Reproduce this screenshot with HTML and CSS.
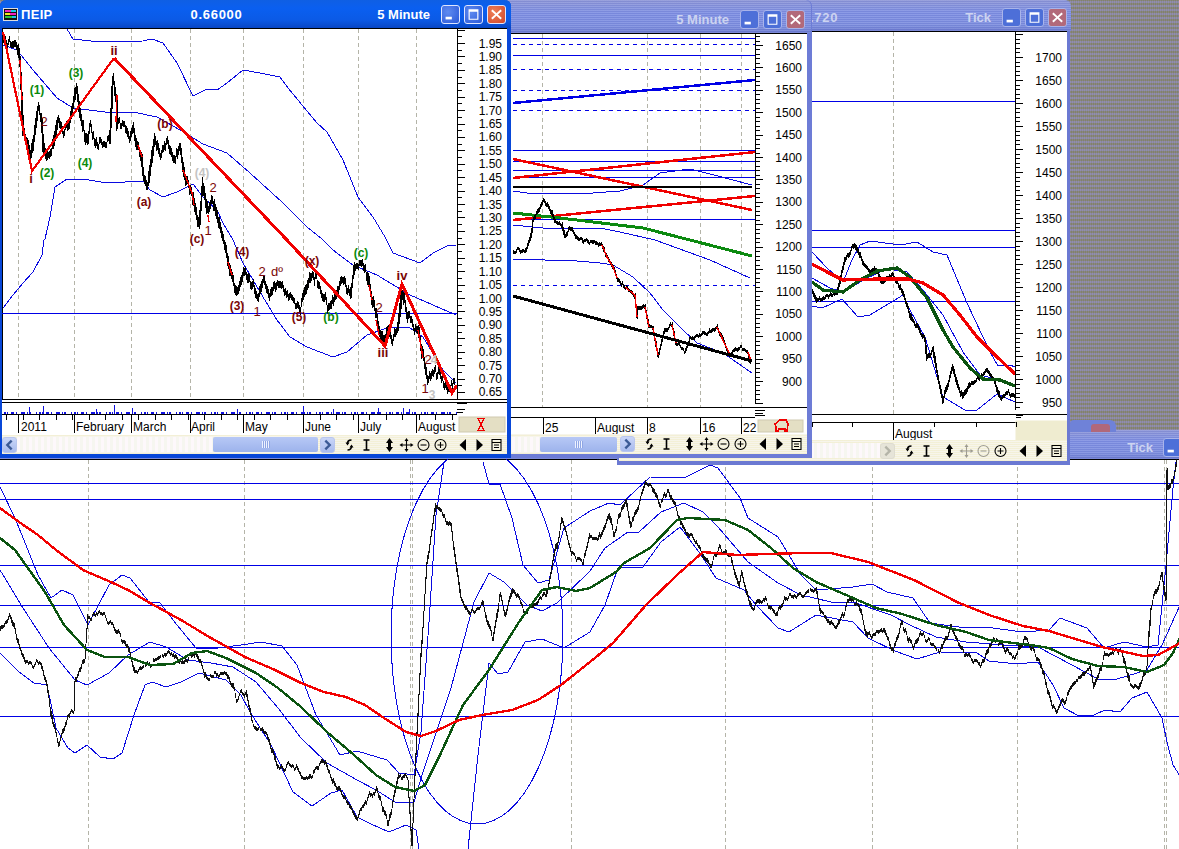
FILE: index.html
```html
<!DOCTYPE html>
<html lang="en">
<head>
    <meta charset="UTF-8">
    <title>ΠΕΙΡ charts</title>
    <link rel="stylesheet" href="styles.css">
</head>
<body>

<svg class="defs" width="0" height="0">
    <!-- column by column noise for the price lines, green is held at .5 so nothing moves sideways -->
    <filter id="noise-main" x="-2%" y="-2%" width="104%" height="104%" color-interpolation-filters="sRGB">
        <feTurbulence type="fractalNoise" baseFrequency="0.28 0.003" numOctaves="2" seed="7"/>
        <feColorMatrix values="1 0 0 0 0  0 0 0 0 .5  0 0 1 0 0  0 0 0 0 1" result="n"/>
        <feDisplacementMap in="SourceGraphic" in2="n" scale="15" xChannelSelector="G" yChannelSelector="R"/>
        <feMorphology operator="dilate" radius="0 1"/>
    </filter>
    <filter id="noise-bars" x="-2%" y="-2%" width="104%" height="104%" color-interpolation-filters="sRGB">
        <feTurbulence type="fractalNoise" baseFrequency="0.45 0.004" numOctaves="2" seed="3"/>
        <feColorMatrix values="1 0 0 0 0  0 0 0 0 .5  0 0 1 0 0  0 0 0 0 1" result="n"/>
        <feDisplacementMap in="SourceGraphic" in2="n" scale="20" xChannelSelector="G" yChannelSelector="R"/>
        <feMorphology operator="dilate" radius="0 2"/>
    </filter>
    <filter id="noise-small" x="-2%" y="-2%" width="104%" height="104%" color-interpolation-filters="sRGB">
        <feTurbulence type="fractalNoise" baseFrequency="0.35 0.004" numOctaves="2" seed="11"/>
        <feColorMatrix values="1 0 0 0 0  0 0 0 0 .5  0 0 1 0 0  0 0 0 0 1" result="n"/>
        <feDisplacementMap in="SourceGraphic" in2="n" scale="9" xChannelSelector="G" yChannelSelector="R"/>
        <feMorphology operator="dilate" radius="0 1"/>
    </filter>
    <symbol id="i-sync" viewBox="0 0 12 14"><path class="sym-ln" d="M8 2C5 2 4 3 4 6M4 12C7 12 8 11 8 8"/><path d="M2 4.500 4 7.500 6 4.500ZM6 9.500 8 6.500 10 9.500Z"/></symbol>
    <symbol id="i-beam" viewBox="0 0 12 14"><path class="sym-ln" d="M3 2h6M6 2v10M3 12h6"/></symbol>
    <symbol id="i-updown" viewBox="0 0 12 14"><path d="M6 0 9.500 5H7.500V9H9.500L6 14 2.500 9H4.500V5H2.500Z"/></symbol>
    <symbol id="i-move" viewBox="0 0 14 14"><path class="sym-thin" d="M7 2v10M2 7h10"/><path d="M7 0 9 3H5ZM7 14 9 11H5ZM0 7 3 5V9ZM14 7 11 5V9Z"/></symbol>
    <symbol id="i-minus" viewBox="0 0 14 14"><circle class="sym-thin" cx="7" cy="7" r="5.500"/><path class="sym-thin" d="M4 7h6"/></symbol>
    <symbol id="i-plus" viewBox="0 0 14 14"><circle class="sym-thin" cx="7" cy="7" r="5.500"/><path class="sym-thin" d="M4 7h6M7 4v6"/></symbol>
    <symbol id="i-left" viewBox="0 0 12 14"><path d="M9.500 1 3 7 9.500 13Z"/></symbol>
    <symbol id="i-right" viewBox="0 0 12 14"><path d="M3 1 9.500 7 3 13Z"/></symbol>
    <symbol id="i-page" viewBox="0 0 12 14"><path class="sym-thin" d="M1.500 1.500h9v11h-9ZM1.500 4.500h9M3.500 7h5M3.500 9.500h5"/></symbol>
    <symbol id="c-min" viewBox="0 0 19 19"><path d="M4 12h7v3H4Z"/></symbol>
    <symbol id="c-max" viewBox="0 0 19 19"><path d="M4 3.500h11v12H4ZM5.300 6.500v7.700h8.400V6.500Z" fill-rule="evenodd"/></symbol>
    <symbol id="c-close" viewBox="0 0 19 19"><path d="M5 4 9.500 8 14 4 15.500 5.500 11 9.500 15.500 13.500 14 15 9.500 11 5 15 3.500 13.500 8 9.500 3.500 5.500Z"/></symbol>
</svg>

<div class="desktop">

    <section class="win-back">
        <div class="stray"><span class="stray-red"></span></div>
        <header class="title title-faded title-back">
            <span class="t-tf">Tick</span>
            <span class="cap cap-faded"><svg><use href="#c-min"/></svg></span>
        </header>
        <svg class="main-chart" viewBox="0 459 1179 390">
            <path class="frame" d="M0 459.500H1179"/>
            <path class="grid" d="M88.500 460V849M244.500 460V849M410.500 460V849M412.500 460V849M571.500 460V849M725.500 460V849M872.500 460V849M1017.500 460V849M1164.500 460V849M1166.500 460V849"/>
            <path class="hline" d="M0 483.500H1179M0 499.500H1179M0 565.500H1179M0 605.500H1179M0 647.500H1179M0 716.500H1179"/>
            <ellipse class="band" cx="477" cy="636" rx="86" ry="188"/>
            <polyline class="band" points="0,487 15,518 38,575 51,598 62,590 73,595 88,625 109,585 122,575 130,578 149,602 160,603 177,625 196,648 211,649 241,645 261,642 282,646 297,665 316,715 340,755 357,751 387,760 399,773 414,775 421,732 429,622 436,515 444,462"/>
            <polyline class="band" points="483,462 489,484 500,484 512,518 523,565 538,583 549,580 564,528 590,511 609,503 620,505 650,477 684,478 710,465 718,468 740,498 748,518 778,537 801,575 816,590 853,587 872,584 887,592 913,598 930,623 966,628 985,627 1023,632 1049,630 1060,618 1087,628 1104,648 1124,642 1147,647 1158,645 1166,565 1173,488 1176,462"/>
            <polyline class="band" points="0,570 23,608 49,648 75,680 87,685 109,673 128,655 150,642 166,647 188,660 211,663 233,667 256,682 278,708 301,738 327,763 357,780 376,790 395,802 414,802 423,772 451,688 474,602 489,573 504,582 527,605 542,611 557,603 590,571 605,548 628,532 639,532 661,512 684,503 703,512 718,527 748,562 778,583 801,595 831,602 853,602 891,615 910,625 936,637 966,642 1004,645 1038,647 1072,665 1098,679 1117,679 1147,670 1162,645 1180,605"/>
            <polyline class="band" points="0,653 19,672 34,683 47,685 56,728 68,748 75,753 87,745 100,757 113,759 122,753 134,715 145,685 152,682 166,687 181,682 199,673 226,680 241,695 250,712 271,745 293,792 312,806 331,793 342,790 357,817 371,824 389,832 406,825 416,830 419,849"/>
            <polyline class="band" points="468,849 478,755 489,663 498,674 508,672 525,642 542,639 564,648 590,632 605,605 618,568 643,567 661,542 680,527 699,552 716,578 744,590 756,605 778,628 789,632 816,615 853,622 868,638 895,651 917,659 940,652 977,653 989,661 1017,664 1038,662 1053,685 1064,708 1079,716 1094,715 1105,710 1120,712 1132,698 1147,692 1162,718 1167,742 1173,765 1180,776"/>
            <polyline class="trace-main" filter="url(#noise-main)" points="0,632 11,615 19,645 26,663 41,663 47,685 53,725 59,742 70,713 74,712 75,682 85,658 88,618 100,612 113,625 128,647 135,672 150,663 169,652 181,663 196,653 207,678 226,672 237,698 246,692 252,722 267,735 278,770 290,763 308,780 324,760 337,788 356,817 376,788 388,822 399,775 408,780 412,842 416,755 421,655 427,565 436,505 451,525 461,598 470,615 482,603 493,640 500,595 506,615 513,588 525,612 546,595 562,522 572,552 583,563 590,538 598,542 609,512 614,533 626,500 631,527 639,505 646,485 652,485 660,505 669,490 680,518 690,538 699,545 710,565 720,550 731,558 739,585 742,572 752,610 763,598 776,614 786,598 816,590 821,612 836,628 850,598 859,605 868,638 883,628 893,650 902,625 914,648 921,633 940,652 951,627 964,653 981,665 994,638 1015,658 1025,637 1040,662 1052,705 1057,712 1075,682 1090,668 1094,687 1105,655 1122,650 1130,685 1139,687 1147,668 1151,605 1162,572 1166,602 1166,532 1167,472 1168,492 1175,472 1177,460"/>
            <polyline class="avg-green" points="0,538 15,550 45,592 64,625 87,650 105,657 128,657 150,665 173,664 192,653 207,651 226,658 256,673 278,688 301,707 327,732 354,755 376,775 395,787 414,791 425,785 440,755 463,705 489,670 519,622 542,590 557,587 576,591 590,588 616,572 624,563 650,548 677,520 688,518 725,520 748,530 771,548 793,568 816,582 853,598 876,608 902,614 936,625 966,632 989,640 1030,645 1049,648 1072,659 1098,666 1124,667 1147,672 1164,665 1173,653 1180,638"/>
            <polyline class="avg-red" points="0,508 19,522 38,535 56,550 83,570 113,583 128,590 150,603 181,620 211,638 245,657 275,670 301,683 324,692 346,697 365,705 384,718 406,732 421,736 436,731 459,720 482,715 512,710 538,700 561,685 590,662 613,643 646,605 677,575 703,552 737,555 767,554 804,553 831,553 868,562 914,580 959,603 989,615 1023,626 1049,631 1102,647 1143,656 1158,655 1180,643"/>
        </svg>
    </section>

    <section class="win win-three">
        <header class="title title-faded title-three">
            <span class="t-value">.720</span>
            <span class="t-tf">Tick</span>
            <span class="cap cap-faded"><svg><use href="#c-min"/></svg></span>
            <span class="cap cap-faded"><svg><use href="#c-max"/></svg></span>
            <span class="cap cap-red cap-faded"><svg><use href="#c-close"/></svg></span>
        </header>
        <svg class="chart chart-three" viewBox="619 31 448 409">
            <path class="frame" d="M619 31.500H1067M619 414.500H1067M619 422.500H1016"/>
            <path class="grid" d="M893.500 32V414"/>
            <path class="hline" d="M619 101.500H1015M619 230.500H1015M619 247.500H1015M619 301.500H1015"/>
            <polyline class="band" points="812,252 827,268 843,282 852,260 860,245 870,241 900,245 917,242 933,252 947,255 967,303 990,352 998,366 1010,365 1015,367"/>
            <polyline class="band" points="812,278 830,288 843,292 867,278 887,269 907,272 923,290 943,315 963,352 980,375 1000,380 1015,386"/>
            <polyline class="band" points="812,306 822,308 842,299 858,317 870,315 903,295 910,310 925,337 943,397 965,410 977,410 997,394 1015,402"/>
            <polyline class="trace" filter="url(#noise-small)" points="812,290 817,300 837,293 845,260 855,244 863,263 872,273 875,268 882,282 893,275 900,287 908,307 912,320 925,338 927,358 933,348 937,373 943,400 953,367 958,387 963,397 970,383 987,372 995,383 1000,398 1008,392 1015,398"/>
            <polyline class="avg-green thick" points="812,282 823,290 843,292 860,280 877,271 897,268 910,277 927,298 943,330 953,347 970,368 983,379 1000,380 1015,386"/>
            <polyline class="avg-red thick" points="812,264 827,272 843,280 877,279 908,279 923,283 943,295 960,315 977,337 993,353 1015,374"/>
            <line class="axis-line" x1="1015.500" y1="31" x2="1015.500" y2="410"/>
            <line class="tick-major" x1="1019" y1="34" x2="1019" y2="410"/>
            <line class="tick-minor-three" x1="1017.500" y1="34" x2="1017.500" y2="410"/>
            <g class="axis">
                <text x="1062" y="61.500">1700</text><text x="1062" y="84.500">1650</text><text x="1062" y="107.500">1600</text><text x="1062" y="130.500">1550</text>
                <text x="1062" y="153.500">1500</text><text x="1062" y="176.500">1450</text><text x="1062" y="199.500">1400</text><text x="1062" y="222.500">1350</text>
                <text x="1062" y="245.500">1300</text><text x="1062" y="268.500">1250</text><text x="1062" y="291.500">1200</text><text x="1062" y="314.500">1150</text>
                <text x="1062" y="337.500">1100</text><text x="1062" y="360.500">1050</text><text x="1062" y="383.500">1000</text><text x="1062" y="406.500">950</text>
            </g>
            <rect class="corner corner-three" x="1016" y="421" width="51" height="19"/>
            <path class="frame" d="M1016 415.500H1023M1016 417.500H1021M812.500 422V427M852.500 422V427M893.500 422V440M934.500 422V427M976.500 422V427M1016.500 422V427"/>
            <text class="date" x="895" y="438">August</text>
        </svg>
        <div class="toolbar">
            <div class="scroll">
                <span class="track"></span>
                <span class="arrow arrow-off"><svg viewBox="0 0 12 12"><path class="ln" d="M4 2 8 6 4 10"/></svg></span>
            </div>
            <div class="tools">
                <span class="tool"><svg><use href="#i-sync"/></svg></span>
                <span class="tool"><svg><use href="#i-beam"/></svg></span>
                <span class="tool tool-first"><svg><use href="#i-updown"/></svg></span>
                <span class="tool tool-off"><svg><use href="#i-move"/></svg></span>
                <span class="tool tool-off"><svg><use href="#i-minus"/></svg></span>
                <span class="tool"><svg><use href="#i-plus"/></svg></span>
                <span class="tool tool-nav"><svg><use href="#i-left"/></svg></span>
                <span class="tool"><svg><use href="#i-right"/></svg></span>
                <span class="tool"><svg><use href="#i-page"/></svg></span>
            </div>
        </div>
    </section>

    <section class="win win-two">
        <header class="title title-faded title-two">
            <span class="t-tf">5 Minute</span>
            <span class="cap cap-faded"><svg><use href="#c-min"/></svg></span>
            <span class="cap cap-faded"><svg><use href="#c-max"/></svg></span>
            <span class="cap cap-red cap-faded"><svg><use href="#c-close"/></svg></span>
        </header>
        <svg class="chart chart-two" viewBox="302 33 505 401">
            <path class="frame" d="M302 33.500H807M302 407H807M302 417.500H755"/>
            <path class="grid" d="M542.500 34V407M647.500 34V407M700.500 34V407M741.500 34V407"/>
            <path class="hline" d="M513 38.500H755M513 55.500H755M513 150.500H755M513 161.500H755M513 170.500H755M513 177.500H755M513 219.500H755"/>
            <path class="hdash" d="M513 44.500H755M513 69.500H755M513 90.500H755M513 110.500H755M513 285.500H755"/>
            <line class="thick-blue" x1="513" y1="103" x2="755" y2="80"/>
            <polyline class="band" points="513,191 527,193 543,193 593,193 620,191 643,185 660,173 690,169 710,174 752,185"/>
            <polyline class="band" points="513,225 543,228 600,228 620,232 655,240 710,260 750,278"/>
            <polyline class="band" points="513,259 577,261 600,263 613,265 633,277 650,293 663,310 683,330 697,343 723,353 752,373"/>
            <line class="thick-red" x1="513" y1="178" x2="755" y2="152"/>
            <line class="thick-red" x1="513" y1="159" x2="752" y2="210"/>
            <line class="thick-red" x1="513" y1="220" x2="755" y2="196"/>
            <line class="thick-black" x1="513" y1="187" x2="752" y2="187"/>
            <polyline class="thick-green" points="513,213 560,218 643,228 690,240 752,256"/>
            <polyline class="trace-two" filter="url(#noise-small)" points="513,252 520,250 525,252 530,240 532,230 533,220 540,208 544,200 552,213 555,222 562,225 565,237 570,228 578,239 593,242 602,245 607,257 613,267 617,278 625,287 635,295 637,317 638,307 645,307 649,327 653,328 658,355 665,330 672,325 676,343 685,352 690,340 710,332 717,327 722,338 730,355 740,348 748,352 751,361"/>
            <polyline class="trace-red" points="602,245 607,257 613,267 617,278"/>
            <polyline class="trace-red" points="625,287 635,295 637,317"/>
            <polyline class="trace-red" points="645,307 649,327"/>
            <polyline class="trace-red" points="653,328 658,355"/>
            <polyline class="trace-red" points="672,325 676,343"/>
            <polyline class="trace-red" points="717,327 722,338 730,355"/>
            <polyline class="trace-red" points="748,352 751,361"/>
            <line class="thick-black wide" x1="513" y1="296" x2="752" y2="361"/>
            <line class="axis-line" x1="755.500" y1="33" x2="755.500" y2="404"/>
            <line class="tick-major" x1="759" y1="22.600" x2="759" y2="404"/>
            <line class="tick-minor-two" x1="757.500" y1="22.600" x2="757.500" y2="404"/>
            <g class="axis">
                <text x="802" y="49.500">1650</text><text x="802" y="71.900">1600</text><text x="802" y="94.300">1550</text><text x="802" y="116.700">1500</text>
                <text x="802" y="139.100">1450</text><text x="802" y="161.500">1400</text><text x="802" y="183.900">1350</text><text x="802" y="206.300">1300</text>
                <text x="802" y="228.700">1250</text><text x="802" y="251.100">1200</text><text x="802" y="273.500">1150</text><text x="802" y="295.900">1100</text>
                <text x="802" y="318.300">1050</text><text x="802" y="340.700">1000</text><text x="802" y="363.100">950</text><text x="802" y="385.500">900</text>
            </g>
            <path class="frame" d="M755 410.500H765M755 413.500H763M755 415.500H765M543.500 417V434M595.500 417V434M647.500 417V434M700.500 417V434M741.500 417V434"/>
            <text class="date" x="545" y="432">25</text>
            <text class="date" x="597" y="432">August</text>
            <text class="date" x="649" y="432">8</text>
            <text class="date" x="702" y="432">16</text>
            <text class="date" x="743" y="432">22</text>
            <rect class="corner" x="758" y="420" width="45" height="12"/>
            <path class="bear" d="M775 424 780 420 786 420 788 424 787 431H785V429H779L778 431H776V427Z"/>
        </svg>
        <div class="toolbar">
            <div class="scroll">
                <span class="track"></span>
                <span class="thumb thumb-two"><i></i></span>
                <span class="arrow"><svg viewBox="0 0 12 12"><path class="ln" d="M4 2 8 6 4 10"/></svg></span>
            </div>
            <div class="tools">
                <span class="tool"><svg><use href="#i-sync"/></svg></span>
                <span class="tool"><svg><use href="#i-beam"/></svg></span>
                <span class="tool tool-first"><svg><use href="#i-updown"/></svg></span>
                <span class="tool"><svg><use href="#i-move"/></svg></span>
                <span class="tool"><svg><use href="#i-minus"/></svg></span>
                <span class="tool"><svg><use href="#i-plus"/></svg></span>
                <span class="tool tool-nav"><svg><use href="#i-left"/></svg></span>
                <span class="tool"><svg><use href="#i-right"/></svg></span>
                <span class="tool"><svg><use href="#i-page"/></svg></span>
            </div>
        </div>
    </section>

    <section class="win win-one">
        <header class="title title-one">
            <svg class="app-icon" viewBox="0 0 15 13">
                <rect class="ai-box" x=".5" y=".5" width="14" height="12"/>
                <rect class="ai-m" x="2" y="2" width="6" height="2"/><rect class="ai-c" x="8" y="2" width="5" height="2"/>
                <rect class="ai-y" x="2" y="5" width="5" height="2"/><rect class="ai-m" x="7" y="5" width="6" height="2"/>
                <rect class="ai-g" x="2" y="8" width="7" height="2"/><rect class="ai-c" x="9" y="8" width="4" height="2"/>
            </svg>
            <span class="t-name">ΠΕΙΡ</span>
            <span class="t-value">0.66000</span>
            <span class="t-tf">5 Minute</span>
            <span class="cap"><svg><use href="#c-min"/></svg></span>
            <span class="cap"><svg><use href="#c-max"/></svg></span>
            <span class="cap cap-red"><svg><use href="#c-close"/></svg></span>
        </header>
        <svg class="chart chart-one" viewBox="2 28 505 407">
            <path class="frame" d="M2 28.500H507M2.500 28V399M2 399.500H507M2 402.500H507M2 414.500H457"/>
            <path class="grid" d="M18.500 29V399M74.500 29V399M131.500 29V399M190.500 29V399M243.500 29V399M303.500 29V399M358.500 29V399M416.500 29V399"/>
            <line class="hline" x1="2" y1="313.500" x2="457" y2="313.500"/>
            <polyline class="band" points="67,29 73,39 100,42 143,41 152,39 163,43 177,63 193,96 207,89 217,90 227,83 243,70 260,73 280,77 288,88 317,123 327,132 343,160 358,197 373,217 385,237 393,253 420,263 433,253 447,246 456,245"/>
            <polyline class="band" points="3,45 17,50 33,70 57,98 73,108 113,113 133,112 157,117 180,130 203,144 227,153 250,173 283,203 307,227 322,239 333,250 353,265 377,275 410,295 433,305 456,315"/>
            <polyline class="band" points="3,308 13,295 23,283 33,272 42,255 44,240 45,239 50,217 55,187 67,179 83,179 107,183 143,181 150,190 163,197 177,192 193,184 203,197 217,210 223,223 233,240 243,263 263,297 277,320 290,337 307,347 333,357 347,352 367,335 390,327 410,328 423,337 443,370 456,383"/>
            <polyline class="trace-bars" filter="url(#noise-bars)" points="3,40 12,45 15,42 18,48 20,60 22,100 23,133 27,137 30,160 33,143 38,107 42,117 43,143 48,160 53,150 58,118 63,130 70,123 77,88 80,113 87,143 90,127 98,145 110,140 113,77 117,100 117,123 125,127 130,138 133,128 137,147 142,157 143,173 148,187 155,137 160,153 167,140 175,160 180,147 185,177 192,193 195,210 199,227 203,183 208,213 213,200 218,220 223,239 225,245 230,270 237,293 245,270 258,298 263,280 270,297 277,280 287,295 300,307 312,272 330,308 342,278 350,295 355,267 362,263 367,273 372,300 380,330 383,343 388,327 392,340 398,330 402,290 408,317 418,330 422,353 428,380 433,370 440,377 450,387 455,383"/>
            <polyline class="trace-red" points="20,60 22,100"/>
            <polyline class="trace-red" points="117,95 116,122"/>
            <polyline class="trace-red" points="138,145 142,157"/>
            <polyline class="trace-red" points="183,170 192,193 194,205"/>
            <polyline class="trace-red" points="208,215 209,222"/>
            <polyline class="trace-red" points="228,262 232,275"/>
            <polyline class="trace-red" points="369,285 372,300"/>
            <polyline class="trace-red" points="376,320 379,335"/>
            <polyline class="trace-red" points="418,330 423,358"/>
            <polyline class="zigzag" points="114,58 286,239 385,346 402,284 452,393 457,385"/>
            <polyline class="zigzag zigzag-thin" points="3,32 32,171 114,58"/>
            <g class="wave">
                <text class="w-b" x="114" y="55">ii</text><text class="w-g" x="76" y="77">(3)</text><text class="w-g" x="37" y="94">(1)</text>
                <text class="w-d" x="44" y="126">2</text><text class="w-r" x="165" y="128">(b)</text><text class="w-g" x="85" y="167">(4)</text>
                <text class="w-g" x="47" y="177">(2)</text><text class="w-b" x="31" y="183">i</text><text class="w-n" x="202" y="177">(4)</text>
                <text class="w-d" x="213" y="192">2</text><text class="w-r" x="144" y="206">(a)</text><text class="w-d" x="208" y="235">1</text>
                <text class="w-r" x="197" y="243">(c)</text><text class="w-r" x="242" y="256">(4)</text><text class="w-d" x="262" y="276">2</text>
                <text class="w-d" x="277" y="276">dº</text><text class="w-r" x="312" y="265">(x)</text><text class="w-g" x="361" y="257">(c)</text>
                <text class="w-b" x="402" y="280">iv</text><text class="w-r" x="237" y="310">(3)</text><text class="w-d" x="257" y="316">1</text>
                <text class="w-r" x="299" y="321">(5)</text><text class="w-g" x="331" y="321">(b)</text><text class="w-d" x="379" y="312">2</text>
                <text class="w-b" x="383" y="357">iii</text><text class="w-d" x="428" y="364">2</text><text class="w-n" x="434" y="364">4</text>
                <text class="w-d" x="425" y="393">1</text><text class="w-n" x="432" y="399">3</text>
            </g>
            <line class="axis-line" x1="457.500" y1="28" x2="457.500" y2="399"/>
            <line class="tick-major" x1="461" y1="29.580" x2="461" y2="399"/>
            <line class="tick-minor-one" x1="459.500" y1="29.580" x2="459.500" y2="399"/>
            <g class="axis">
                <text x="502" y="47.500">1.95</text><text x="502" y="60.900">1.90</text><text x="502" y="74.300">1.85</text><text x="502" y="87.800">1.80</text>
                <text x="502" y="101.200">1.75</text><text x="502" y="114.600">1.70</text><text x="502" y="128">1.65</text><text x="502" y="141.400">1.60</text>
                <text x="502" y="154.900">1.55</text><text x="502" y="168.300">1.50</text><text x="502" y="181.700">1.45</text><text x="502" y="195.100">1.40</text>
                <text x="502" y="208.500">1.35</text><text x="502" y="222">1.30</text><text x="502" y="235.400">1.25</text><text x="502" y="248.800">1.20</text>
                <text x="502" y="262.200">1.15</text><text x="502" y="275.600">1.10</text><text x="502" y="289.100">1.05</text><text x="502" y="302.500">1.00</text>
                <text x="502" y="315.900">0.95</text><text x="502" y="329.300">0.90</text><text x="502" y="342.700">0.85</text><text x="502" y="356.200">0.80</text>
                <text x="502" y="369.600">0.75</text><text x="502" y="383">0.70</text><text x="502" y="396.400">0.65</text>
            </g>
            <line class="volume" x1="4" y1="413" x2="457" y2="413"/>
            <path class="spikes" d="M29.500 414V407M43.500 414V406M96.500 414V409M114.500 414V405M132.500 414V408M237.500 414V409M303.500 414V406M333.500 414V409M378.500 414V408M403.500 414V408M409.500 414V409"/>
            <path class="frame" d="M457 403.500H467M457 409.500H465M457 412.500H463M18.500 414V433M74.500 414V433M131.500 414V433M190.500 414V433M243.500 414V433M303.500 414V433M358.500 414V433M416.500 414V433"/>
            <line class="time-ticks" x1="6" y1="417" x2="457" y2="417"/>
            <text class="date" x="21" y="431">2011</text>
            <text class="date" x="76" y="431">February</text>
            <text class="date" x="133" y="431">March</text>
            <text class="date" x="191" y="431">April</text>
            <text class="date" x="245" y="431">May</text>
            <text class="date" x="305" y="431">June</text>
            <text class="date" x="360" y="431">July</text>
            <text class="date" x="418" y="431">August</text>
            <rect class="corner" x="459" y="417" width="46" height="15"/>
            <path class="hourglass" d="M477 418.500H485M477 430.500H485M478.500 419 483.500 430M483.500 419 478.500 430"/>
        </svg>
        <div class="toolbar">
            <div class="scroll">
                <span class="arrow"><svg viewBox="0 0 12 12"><path class="ln" d="M8 2 4 6 8 10"/></svg></span>
                <span class="track"></span>
                <span class="thumb thumb-one"><i></i></span>
                <span class="arrow"><svg viewBox="0 0 12 12"><path class="ln" d="M4 2 8 6 4 10"/></svg></span>
            </div>
            <div class="tools">
                <span class="tool"><svg><use href="#i-sync"/></svg></span>
                <span class="tool"><svg><use href="#i-beam"/></svg></span>
                <span class="tool tool-first"><svg><use href="#i-updown"/></svg></span>
                <span class="tool"><svg><use href="#i-move"/></svg></span>
                <span class="tool"><svg><use href="#i-minus"/></svg></span>
                <span class="tool"><svg><use href="#i-plus"/></svg></span>
                <span class="tool tool-nav"><svg><use href="#i-left"/></svg></span>
                <span class="tool"><svg><use href="#i-right"/></svg></span>
                <span class="tool"><svg><use href="#i-page"/></svg></span>
            </div>
        </div>
    </section>

</div>

</body>
</html>
```

FILE: styles.css
```css
html, body {
    margin: 0;
    padding: 0;
    background: #ffffff;
}

.defs {
    position: absolute;
}

.sym-ln {
    fill: none;
    stroke: #000000;
    stroke-width: 1.600;
}

.sym-thin {
    fill: none;
    stroke: #000000;
    stroke-width: 1.100;
}

.desktop {
    position: relative;
    width: 1179px;
    height: 849px;
    overflow: hidden;
    font-family: "Liberation Sans", Arial, sans-serif;
    background:
        repeating-linear-gradient(90deg, rgba(150, 140, 190, .25) 0 1px, rgba(120, 125, 90, .25) 1px 2px),
        repeating-linear-gradient(0deg, #85846f 0 2px, #8f8cad 2px 4px);
}

/* windows */
.win {
    position: absolute;
    top: 0;
    display: flex;
    flex-direction: column;
    box-sizing: border-box;
    border-style: solid;
    border-width: 0 4px 4px 2px;
    border-radius: 6px 6px 0 0;
}

.win-one {
    left: 0;
    width: 511px;
    height: 458px;
    border-color: #0847d8;
    border-right-width: 4px;
}

.win-two {
    left: 300px;
    width: 512px;
    height: 458px;
    border-color: #6d7cd6;
    border-right-width: 5px;
}

.win-three {
    left: 617px;
    width: 453px;
    height: 465px;
    border-color: #6b79d2;
    border-right-width: 3px;
}

.win-back {
    position: absolute;
    left: 0;
    top: 430px;
    width: 1179px;
    height: 419px;
    display: flex;
    flex-direction: column;
    background: #ffffff;
}

.stray {
    position: absolute;
    left: 1070px;
    top: -10px;
    width: 46px;
    height: 12px;
    border-radius: 4px 6px 0 0;
    background: #6f82d8;
}

.stray-red {
    position: absolute;
    left: 21px;
    top: 4px;
    width: 19px;
    height: 8px;
    border-radius: 3px 3px 0 0;
    background: #b0687a;
}

/* title bars */
.title {
    display: flex;
    flex: none;
    align-items: center;
    box-sizing: border-box;
    margin: 0 -4px 0 -2px;
    padding-right: 5px;
    gap: 4px;
    border-radius: 6px 6px 0 0;
    color: #ffffff;
    font-size: 13px;
    font-weight: bold;
}

.title-one {
    height: 28px;
    padding-left: 3px;
    background: linear-gradient(#0f5fe4 0, #0a5ff0 30%, #0b5ae6 70%, #0846c4 100%);
}

.title-faded {
    color: #ccd3f0;
    background:
        repeating-linear-gradient(0deg, rgba(255, 255, 255, .1) 0 1px, rgba(70, 80, 160, .12) 1px 2px),
        linear-gradient(#8e97d8 0, #7f90e4 40%, #7e8fe0 80%, #6b7ad0 100%);
}

.title-two {
    height: 33px;
    padding-top: 5px;
    padding-right: 6px;
}

.title-three {
    height: 31px;
    padding-top: 3px;
    padding-right: 4px;
}

.title-back {
    flex: none;
    height: 29px;
    margin: 0 -3px 0 0;
    padding: 6px 0 0 0;
    border-radius: 0;
}

.title-back .t-tf {
    margin-right: 6px;
}

.app-icon {
    width: 15px;
    height: 13px;
    flex: none;
}

.ai-box { fill: #111111; stroke: #dddddd; stroke-width: 1; }
.ai-m { fill: #f022c0; }
.ai-c { fill: #19c8e8; }
.ai-y { fill: #f2e61e; }
.ai-g { fill: #2ec43a; }

.t-name {
    margin-left: -1px;
    font-size: 13px;
    letter-spacing: .3px;
}

.t-value {
    letter-spacing: .7px;
}

.title-one .t-value {
    margin-left: 134px;
}

.title-three .t-value {
    margin-left: 193px;
}

.t-tf {
    margin-left: auto;
    margin-right: 7px;
}

/* caption buttons */
.cap {
    display: block;
    flex: none;
    box-sizing: border-box;
    width: 19px;
    height: 19px;
    border: 1px solid #dfe6ff;
    border-radius: 3px;
    background: radial-gradient(circle at 35% 35%, #5f8bf0, #2a58d8);
    fill: #ffffff;
}

.cap svg {
    display: block;
    width: 100%;
    height: 100%;
}

.cap-red {
    background: radial-gradient(circle at 35% 35%, #ee8058, #d2472a);
}

.cap-faded {
    border-color: #a9b4ea;
    background: #4d6fd8;
}

.cap-red.cap-faded {
    background: #b2697a;
}

/* charts */
.chart {
    display: block;
    flex: none;
    background: #ffffff;
    overflow: hidden;
}

.chart-one { width: 505px; height: 407px; }
.chart-two { width: 505px; height: 401px; }
.chart-three { width: 448px; height: 409px; }

.main-chart {
    display: block;
    width: 1179px;
    height: 390px;
    flex: none;
    background: #ffffff;
}

polyline, ellipse, line {
    fill: none;
}

.chart polyline, .chart line, .chart path,
.main-chart polyline, .main-chart path, .main-chart ellipse {
    shape-rendering: crispEdges;
}

.frame {
    fill: none;
    stroke: #000000;
    stroke-width: 1;
}

.grid {
    fill: none;
    stroke: #b4b4a8;
    stroke-width: 1;
    stroke-dasharray: 4 3;
}

.hline {
    fill: none;
    stroke: #0000e6;
    stroke-width: 1;
}

.hdash {
    fill: none;
    stroke: #0000e6;
    stroke-width: 1;
    stroke-dasharray: 4 4;
}

.band {
    stroke: #0a0ae0;
    stroke-width: 1;
}

.trace-main {
    stroke: #111111;
    stroke-width: 1;
    stroke-linejoin: bevel;
}

.trace {
    stroke: #000000;
    stroke-width: 1.500;
}

.trace-two {
    stroke: #000000;
    stroke-width: 1.300;
}

.trace-bars {
    stroke: #000000;
    stroke-width: 1.800;
    stroke-linejoin: bevel;
}

.trace-red {
    stroke: #f00000;
    stroke-width: 1.400;
}

.avg-red {
    stroke: #f20000;
    stroke-width: 2.400;
}

.avg-green {
    stroke: #0b5410;
    stroke-width: 2.400;
}

.avg-red.thick {
    stroke-width: 3.200;
}

.avg-green.thick {
    stroke-width: 3.200;
}

.zigzag {
    stroke: #f00000;
    stroke-width: 3;
    stroke-linejoin: miter;
}

.zigzag-thin {
    stroke-width: 2.200;
}

.thick-blue {
    stroke: #0000e6;
    stroke-width: 2.500;
}

.thick-red {
    stroke: #f00000;
    stroke-width: 2.500;
}

.thick-black {
    stroke: #000000;
    stroke-width: 2.500;
}

.thick-black.wide {
    stroke-width: 3;
}

.thick-green {
    stroke: #0c8a10;
    stroke-width: 3;
}

.axis-line {
    stroke: #000000;
    stroke-width: 1;
}

.tick-major {
    stroke: #000000;
    stroke-width: 7;
    stroke-dasharray: 1 12.420;
}

.chart-two .tick-major {
    stroke-dasharray: 1 21.400;
}

.chart-three .tick-major {
    stroke-dasharray: 1 22;
}

.tick-minor-one, .tick-minor-two, .tick-minor-three {
    stroke: #000000;
    stroke-width: 4;
}

.tick-minor-one { stroke-dasharray: 1 5.710; }
.tick-minor-two { stroke-dasharray: 1 3.480; }
.tick-minor-three { stroke-dasharray: 1 3.600; }

.axis text {
    fill: #000000;
    font-size: 12px;
    text-anchor: end;
}

.date {
    fill: #000000;
    font-size: 12px;
}

.wave text {
    font-size: 12px;
    text-anchor: middle;
}

.w-r { fill: #7a0606; font-weight: bold; }
.w-g { fill: #0a8a0a; font-weight: bold; }
.w-n { fill: #c4c4c4; font-weight: bold; }
.w-d { fill: #7a0606; }
.w-b { fill: #7a0606; font-weight: bold; }

.wave .w-d, .wave .w-b {
    font-size: 13px;
}

.volume {
    stroke: #1010e0;
    stroke-width: 2;
    stroke-dasharray: 2 1 1 3 3 2 1 4 4 2 1 1 2 5 1 2;
}

.spikes {
    fill: none;
    stroke: #1010e0;
    stroke-width: 1;
}

.time-ticks {
    stroke: #000000;
    stroke-width: 5;
    stroke-dasharray: 1 15.500;
}

.corner {
    fill: #e4dfc4;
    stroke: #cfcab0;
}

.corner-three {
    fill: #efecd0;
    stroke: #efecd0;
}

.hourglass {
    fill: none;
    stroke: #f00000;
    stroke-width: 1.300;
}

.bear {
    fill: none;
    stroke: #f00000;
    stroke-width: 1.500;
}

/* bottom toolbar */
.toolbar {
    display: flex;
    flex: 1;
    align-items: center;
    background:
        repeating-linear-gradient(0deg, rgba(240, 235, 180, .25) 0 1px, rgba(255, 255, 255, .3) 1px 2px),
        #f4f1e2;
}

.scroll {
    display: flex;
    flex: 1;
    align-items: center;
    height: 16px;
    min-width: 0;
}

.track {
    flex: 1;
    height: 15px;
    background: repeating-linear-gradient(90deg, #fdf8fb 0 3px, #f6f6f0 3px 6px);
}

.thumb {
    display: flex;
    flex: none;
    align-items: center;
    justify-content: center;
    height: 15px;
    border-radius: 2px;
    background: linear-gradient(#b7c8f6, #9db3ec);
}

.thumb i {
    width: 8px;
    height: 7px;
    background: repeating-linear-gradient(90deg, #eef2ff 0 1px, #8fa6e4 1px 2px);
}

.thumb-one { width: 105px; margin-right: 2px; }
.thumb-two { width: 77px; margin-right: 3px; }

.arrow {
    display: block;
    flex: none;
    width: 15px;
    height: 16px;
    box-sizing: border-box;
    border: 1px solid #b9c6ee;
    border-radius: 3px;
    background: linear-gradient(#cad6f8, #a9bbee);
}

.arrow svg {
    display: block;
    width: 100%;
    height: 100%;
}

.arrow .ln {
    fill: none;
    stroke: #3c5a96;
    stroke-width: 2.200;
}

.arrow-off {
    border-color: #dedcd0;
    background: #e6e4d8;
}

.arrow-off .ln {
    stroke: #b4b4a8;
}

.tools {
    display: flex;
    flex: none;
    width: 172px;
    padding-left: 6px;
    box-sizing: border-box;
}

.tool {
    display: block;
    flex: none;
    width: 17px;
    height: 14px;
    fill: #000000;
}

.tool svg {
    display: block;
    width: 100%;
    height: 100%;
}

.tool-first {
    margin-left: 6px;
}

.tool-nav {
    margin-left: 5px;
}

.tool-off {
    opacity: .35;
}
```
